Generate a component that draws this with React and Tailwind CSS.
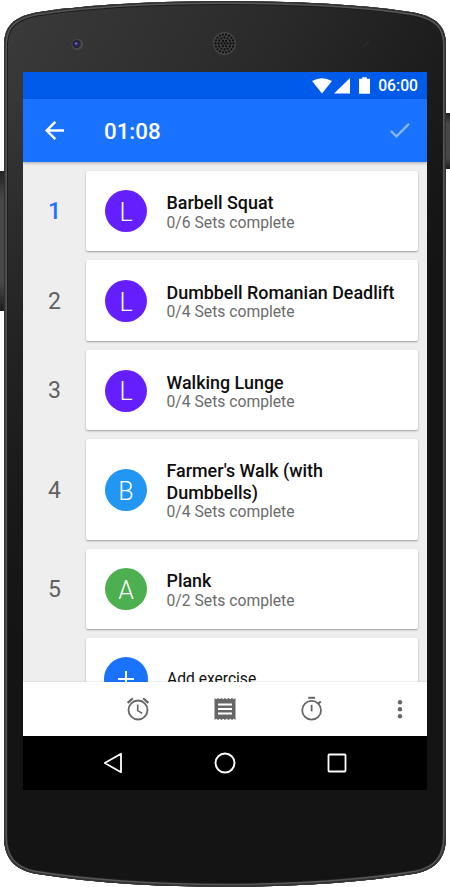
import React from 'react';

const exercises = [
  { id: 1, letter: 'L', name: 'Barbell Squat', sets: '0/6', color: 'bg-[#651fff]', active: true },
  { id: 2, letter: 'L', name: 'Dumbbell Romanian Deadlift', sets: '0/4', color: 'bg-[#651fff]' },
  { id: 3, letter: 'L', name: 'Walking Lunge', sets: '0/4', color: 'bg-[#651fff]' },
  { id: 4, letter: 'B', name: "Farmer's Walk (with Dumbbells)", sets: '0/4', color: 'bg-[#2196f3]', tall: true },
  { id: 5, letter: 'A', name: 'Plank', sets: '0/2', color: 'bg-[#4caf50]' },
];

const BODY =
  'M4 44 C4.5 26 14 17 36 12.5 C90 4 160 1.2 225 1 C290 1.2 360 4 414 12.5 C436 17 445.5 26 446 44 V836 C446 858 436 869 416 873.5 C350 884 290 886.5 225 886.8 C160 886.5 100 884 34 873.5 C14 869 4 858 4 836 Z';

/**
 * PhoneBody - the shell of the phone with camera, speaker and side buttons
 */
const PhoneBody = () => {
  // Holes of the speaker grille
  const holes = [];
  [[0, 1], [3, 6], [6, 12], [9, 18]].forEach(([radius, count]) => {
    for (let i = 0; i < count; i++) {
      const angle = (i / count) * Math.PI * 2;
      holes.push([224.5 + radius * Math.cos(angle), 43.5 + radius * Math.sin(angle)]);
    }
  });

  return (
    <svg className="absolute inset-0" width="450" height="887" viewBox="0 0 450 887" fill="none">
      <defs>
        <linearGradient id="body" x1="0" y1="0" x2="450" y2="240" gradientUnits="userSpaceOnUse">
          <stop offset="0" stopColor="#3b3b3b" />
          <stop offset="0.5" stopColor="#2a2a2a" />
          <stop offset="1" stopColor="#141414" />
        </linearGradient>
        <linearGradient id="fade" x1="0" y1="100" x2="0" y2="640" gradientUnits="userSpaceOnUse">
          <stop offset="0" stopColor="#141414" stopOpacity="0" />
          <stop offset="1" stopColor="#141414" />
        </linearGradient>
        <linearGradient id="button" x1="0" y1="0" x2="0" y2="1">
          <stop offset="0" stopColor="#222" />
          <stop offset="0.2" stopColor="#484848" />
          <stop offset="0.8" stopColor="#484848" />
          <stop offset="1" stopColor="#1c1c1c" />
        </linearGradient>
      </defs>
      <rect x="-4" y="171" width="10" height="140" rx="2" fill="url(#button)" />
      <rect x="444" y="113" width="10" height="56" rx="2" fill="url(#button)" />
      <path d={BODY} fill="url(#body)" />
      <path d={BODY} fill="url(#fade)" />
      <g clipPath="url(#shell)">
        <path d={BODY} stroke="#1c1c1c" strokeWidth="8" />
        <path d={BODY} stroke="#575757" strokeWidth="6" />
        <path d={BODY} stroke="#333" strokeWidth="3" />
      </g>
      <clipPath id="shell">
        <path d={BODY} />
      </clipPath>

      {/* Camera */}
      <circle cx="77.3" cy="44.5" r="5.8" fill="#4a4a4c" />
      <circle cx="76.5" cy="44" r="4.2" fill="#27262f" />
      <circle cx="76.5" cy="44" r="2.4" fill="#2d2a78" />
      <circle cx="76" cy="43.5" r="0.9" fill="#8783d8" />

      {/* Speaker */}
      <circle cx="224.5" cy="43.5" r="11.5" fill="#444" />
      {holes.map(([x, y], i) => (
        <circle key={i} cx={x} cy={y} r="1.15" fill="#0c0c0c" />
      ))}
      <path d="M364 45.5 L369 41.5" stroke="#303030" strokeWidth="1.2" />
    </svg>
  );
};

const StatusBar = () => (
  <div className="h-[27px] shrink-0 bg-[#005bea] flex items-center justify-end pr-[9px] text-white">
    <svg width="20" height="16" viewBox="0 0 20 16" fill="currentColor">
      <path d="M0 3 Q10 -2.6 20 3 L10 15.6 Z" />
    </svg>
    <svg className="ml-[2px]" width="16" height="16" viewBox="0 0 16 16" fill="currentColor">
      <path d="M0 15.6 L16 0 V15.6 Z" />
    </svg>
    <svg className="ml-[9px]" width="11" height="17" viewBox="0 0 11 17" fill="currentColor">
      <path d="M0.7 1.8 H3.2 V0.2 H7.8 V1.8 H10.3 Q11 1.8 11 2.5 V16.2 Q11 16.8 10.3 16.8 H0.7 Q0 16.8 0 16.2 V2.5 Q0 1.8 0.7 1.8 Z" />
    </svg>
    <span className="ml-2 pt-px text-[15.7px] leading-none font-medium">06:00</span>
  </div>
);

const AppBar = () => (
  <div className="h-[63px] shrink-0 bg-[#1a73ff] flex items-center pl-[22px] pr-[17px] text-white relative z-10 shadow-[0_1px_3px_rgba(0,0,0,0.3)]">
    <svg width="19" height="19" viewBox="4 4 16 16" fill="currentColor">
      <path d="M20 11H7.83l5.59-5.59L12 4l-8 8 8 8 1.41-1.41L7.83 13H20v-2z" />
    </svg>
    <span className="ml-[40px] pt-[2px] text-[22.3px] leading-none font-medium">01:08</span>
    <svg className="ml-auto" width="20" height="15" viewBox="3.4 5.6 17.6 13.4" fill="#8cb9ff">
      <path d="M9 16.17L4.83 12l-1.42 1.41L9 19 21 7l-1.41-1.41z" />
    </svg>
  </div>
);

/**
 * ExerciseRow component - the order number and the card of one exercise
 */
const ExerciseRow = ({ exercise }) => (
  <div className={`flex shrink-0 ${exercise.tall ? 'h-[100.2px]' : 'h-[80.6px]'}`}>
    <div
      className={`w-[63px] pt-[3px] flex items-center justify-center text-[23px] ${
        exercise.active ? 'text-[#1a73ff] font-medium' : 'text-[#616161]'
      }`}
    >
      {exercise.id}
    </div>
    <div className="w-[332px] bg-white rounded-[2px] shadow-[0_1px_2px_rgba(0,0,0,0.35)] flex items-center pl-[19px] pr-4">
      <div className={`mt-px size-[42px] pt-[3px] shrink-0 rounded-full flex items-center justify-center text-white text-[25px] font-light ${exercise.color}`}>
        {exercise.letter}
      </div>
      <div className="ml-[19.5px] pt-[3px]">
        <div className="text-[17.9px] leading-[21.5px] font-medium text-[#0e0e0e]">{exercise.name}</div>
        <div className="text-[15.7px] leading-[18.5px] text-[#6b6b6b]">{exercise.sets} Sets complete</div>
      </div>
    </div>
  </div>
);

const AddExercise = () => (
  <div className="flex shrink-0 h-[80.6px] pl-[63px]">
    <div className="w-[332px] bg-white rounded-[2px] shadow-[0_1px_2px_rgba(0,0,0,0.35)] flex items-center pl-[18px]">
      <div className="mt-px size-[44px] rounded-full bg-[#1a73ff] flex items-center justify-center">
        <svg width="16" height="16" viewBox="0 0 16 16" stroke="#fff" strokeWidth="2">
          <path d="M8 0 V16 M0 8 H16" />
        </svg>
      </div>
      <div className="ml-[19px] pt-[3px] text-[15.6px] text-[#0e0e0e]">Add exercise</div>
    </div>
  </div>
);

const BottomBar = () => (
  <div className="h-[54px] shrink-0 bg-white relative z-10 flex items-center pl-[102px] pr-[15px] text-[#666] shadow-[0_-1px_1px_rgba(0,0,0,0.06)]">
    {/* Alarm */}
    <svg width="26" height="26" viewBox="0 0 26 26" fill="none" stroke="currentColor" strokeWidth="1.8">
      <circle cx="13" cy="14" r="9.5" />
      <path d="M12.7 8.6 V14.6 L17.2 17.4" strokeWidth="1.6" />
      <path d="M2.6 6.8 L7.8 2.4 M23.4 6.8 L18.2 2.4" strokeWidth="2.2" />
    </svg>
    {/* Receipt */}
    <svg className="ml-[61px]" width="26" height="26" viewBox="0 0 26 26">
      <path
        d="M2.5 2 L4.2 3.2 L6 2 L7.7 3.2 L9.5 2 L11.2 3.2 L13 2 L14.7 3.2 L16.5 2 L18.2 3.2 L20 2 L21.8 3.2 L23.5 2 V24 L21.8 22.8 L20 24 L18.2 22.8 L16.5 24 L14.7 22.8 L13 24 L11.2 22.8 L9.5 24 L7.7 22.8 L6 24 L4.2 22.8 L2.5 24 Z"
        fill="currentColor"
      />
      <path d="M6 8.5 H20 M6 13 H20 M6 17.5 H20" stroke="#fff" strokeWidth="2" />
    </svg>
    {/* Timer */}
    <svg className="ml-[61px]" width="26" height="26" viewBox="0 0 26 26" fill="none" stroke="currentColor" strokeWidth="1.8">
      <circle cx="12.6" cy="14.3" r="9.4" />
      <path d="M12.6 8.8 V15.4" />
      <path d="M9.2 1.8 H16" strokeWidth="2" />
      <path d="M19.4 7.6 L21.8 5.4" strokeWidth="2" />
    </svg>
    {/* More */}
    <svg className="ml-auto" width="24" height="26" viewBox="0 0 24 26" fill="currentColor">
      <circle cx="12" cy="6.2" r="2.2" />
      <circle cx="12" cy="13.2" r="2.2" />
      <circle cx="12" cy="20.2" r="2.2" />
    </svg>
  </div>
);

const NavBar = () => (
  <div className="h-[54px] shrink-0 bg-black flex items-center justify-center gap-[90px]">
    <svg width="22" height="22" viewBox="0 0 22 22" fill="none" stroke="#fff" strokeWidth="1.8" strokeLinejoin="round">
      <path d="M19 1.8 V20.2 L2.8 11 Z" />
    </svg>
    <svg width="22" height="22" viewBox="0 0 22 22" fill="none" stroke="#fff" strokeWidth="1.9">
      <circle cx="11" cy="11" r="9.5" />
    </svg>
    <svg width="22" height="22" viewBox="0 0 22 22" fill="none" stroke="#fff" strokeWidth="1.8">
      <rect x="2.5" y="2.5" width="17" height="17" rx="0.8" />
    </svg>
  </div>
);

const App = () => {
  return (
    <div className="relative w-[450px] h-[887px] overflow-hidden bg-white font-['Roboto',sans-serif]">
      <PhoneBody />
      <div className="relative pt-[72px] pl-[23px]">
        <div className="w-[404px] h-[718px] flex flex-col overflow-hidden">
          <StatusBar />
          <AppBar />
          <div className="flex-1 min-h-0 overflow-hidden bg-[#eee] flex flex-col gap-[9px] pt-[8.6px]">
            {exercises.map(exercise => (
              <ExerciseRow key={exercise.id} exercise={exercise} />
            ))}
            <AddExercise />
          </div>
          <BottomBar />
          <NavBar />
        </div>
      </div>
    </div>
  );
};

export default App;
